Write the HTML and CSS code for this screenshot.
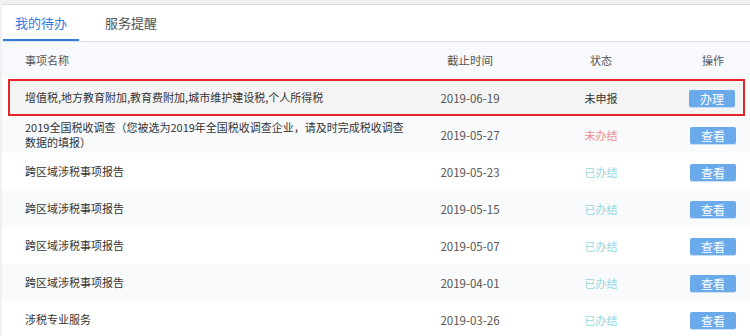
FILE: index.html
```html
<!DOCTYPE html>
<html lang="zh-CN">
<head>
    <meta charset="utf-8" />
    <title>我的待办</title>
    <link rel="stylesheet" href="styles.css">
</head>
<body>
    <div class="panel">
        <div class="tabs">
            <a href="#" class="tab on">我的待办</a>
            <a href="#" class="tab">服务提醒</a>
        </div>

        <div class="list">
            <div class="row head">
                <span class="name">事项名称</span>
                <span class="date">截止时间</span>
                <span class="state">状态</span>
                <span class="op">操作</span>
            </div>

            <div class="row active">
                <span class="name">增值税,地方教育附加,教育费附加,城市维护建设税,个人所得税</span>
                <span class="date">2019-06-19</span>
                <span class="state">未申报</span>
                <span class="op"><a href="#" class="btn">办理</a></span>
            </div>
            <div class="row odd">
                <span class="name">2019全国税收调查（您被选为2019年全国税收调查企业，请及时完成税收调查数据的填报）</span>
                <span class="date">2019-05-27</span>
                <span class="state todo">未办结</span>
                <span class="op"><a href="#" class="btn">查看</a></span>
            </div>
            <div class="row">
                <span class="name">跨区域涉税事项报告</span>
                <span class="date">2019-05-23</span>
                <span class="state done">已办结</span>
                <span class="op"><a href="#" class="btn">查看</a></span>
            </div>
            <div class="row odd">
                <span class="name">跨区域涉税事项报告</span>
                <span class="date">2019-05-15</span>
                <span class="state done">已办结</span>
                <span class="op"><a href="#" class="btn">查看</a></span>
            </div>
            <div class="row">
                <span class="name">跨区域涉税事项报告</span>
                <span class="date">2019-05-07</span>
                <span class="state done">已办结</span>
                <span class="op"><a href="#" class="btn">查看</a></span>
            </div>
            <div class="row odd">
                <span class="name">跨区域涉税事项报告</span>
                <span class="date">2019-04-01</span>
                <span class="state done">已办结</span>
                <span class="op"><a href="#" class="btn">查看</a></span>
            </div>
            <div class="row">
                <span class="name">涉税专业服务</span>
                <span class="date">2019-03-26</span>
                <span class="state done">已办结</span>
                <span class="op"><a href="#" class="btn">查看</a></span>
            </div>
        </div>
    </div>
</body>
</html>
```

FILE: styles.css
```css
body,
div,
span,
a {
    margin: 0;
    padding: 0
}

a {
    text-decoration: none
}

body {
    background: #f1f1f1;
    font-family: "Noto Sans CJK SC", "Microsoft YaHei", sans-serif;
    font-size: 11px;
    color: #333;
    overflow: hidden
}

.panel {
    margin: 4px 0 0 2px;
    background: #fff;
    border-top: 1px solid #dcdcdc;
    height: 331px;
    overflow: hidden
}

/* 탭 */
.tabs {
    display: flex;
    height: 36px;
    border-bottom: 1px solid #dde1e6;
    padding-left: 1px
}

.tab {
    display: flex;
    align-items: center;
    padding: 0 12px;
    margin-right: 14px;
    font-size: 13px;
    color: #555;
    border-bottom: 2px solid transparent
}

.tab.on {
    color: #2f7de1;
    border-bottom-color: #2f7de1
}

/* 목록 */
.row {
    display: grid;
    grid-template-columns: 411px 102px 160px 64px;
    align-items: center;
    min-height: 37px;
    padding: 0 5px 0 6px;
    box-sizing: border-box
}

.row.head {
    background: #f8f9fc;
    color: #555;
    min-height: 36px;
    margin-bottom: 1px
}

.row.odd {
    background: #f9fafc
}

.row.active {
    margin: 0 5px 0 6px;
    padding: 0;
    border: 2px solid #e8242b;
    background: #f4f4f4;
    grid-template-columns: 409px 102px 160px 62px
}

.name {
    padding: 0 9px 0 17px;
    line-height: 15px
}

.row.active .name {
    padding-left: 15px
}

.date,
.state,
.op {
    text-align: center
}

.date {
    color: #555;
    font-size: 11.5px
}

.state.todo {
    color: #f28b8b
}

.state.done {
    color: #95d7df
}

.btn {
    display: inline-block;
    width: 46px;
    height: 17px;
    line-height: 17px;
    background: #6aaaea;
    border-radius: 2px;
    color: #fff;
    font-size: 12px;
    vertical-align: middle;
    box-shadow: 0 1px 0 #c9dff5
}
```
